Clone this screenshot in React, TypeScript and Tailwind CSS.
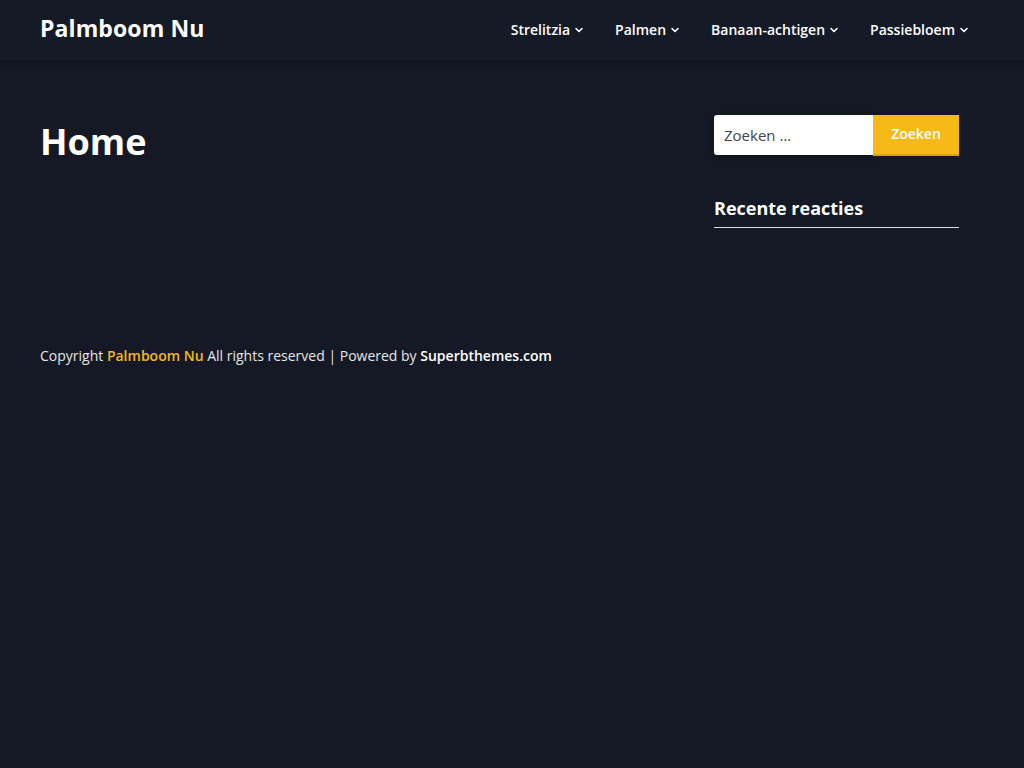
import React from "react";

const navItems = ["Strelitzia", "Palmen", "Banaan-achtigen", "Passiebloem"];

function Chevron() {
  return (
    <svg width="10" height="10" viewBox="0 0 10 10" className="ml-[4px] mt-[1px]">
      <path d="M2 3.5 L5 6.5 L8 3.5" fill="none" stroke="currentColor" strokeWidth="1.6" strokeLinecap="round" strokeLinejoin="round" />
    </svg>
  );
}

export default function App() {
  return (
    <div className="min-h-screen bg-[#141925] text-white font-['Open_Sans',sans-serif]">
      {/* Header */}
      <header className="relative z-10 h-[60px] bg-[#151a27] shadow-[0_2px_6px_rgba(0,0,0,0.35)]">
        <div className="flex h-full items-center justify-between px-[40px]">
          <a className="text-[23px] font-bold leading-none tracking-[0.1px] pb-[4px]">Palmboom Nu</a>
          <nav className="flex items-center gap-[31px] pr-[15px] pb-[2px]">
            {navItems.map((item) => (
              <a key={item} className="flex items-center text-[14px] font-semibold">
                {item}
                <Chevron />
              </a>
            ))}
          </nav>
        </div>
      </header>

      {/* Content */}
      <div className="flex px-[40px] pt-[55px]">
        <main className="flex-1">
          <h1 className="text-[36px] font-bold leading-[52px] mt-[1px]">Home</h1>
        </main>
        <aside className="w-[245px] mr-[25px]">
          <form className="flex h-[41px]" onSubmit={(e) => e.preventDefault()}>
            <input
              placeholder="Zoeken …"
              className="w-[159px] h-[40px] rounded-l-[3px] bg-white px-[10px] text-[15px] text-[#333] placeholder:text-[#444] outline-none shadow-[0_2px_6px_rgba(0,0,0,0.3)]"
            />
            <button className="flex-1 h-[41px] bg-[#f5b918] border-b-[2px] border-[#d9a20f] text-[14px] font-semibold text-white pb-[2px]">
              Zoeken
            </button>
          </form>
          <h2 className="mt-[39px] text-[18px] font-bold leading-[26px]">Recente reacties</h2>
          <div className="mt-[6px] h-px bg-[#dcdcdc]" />
        </aside>
      </div>

      {/* Footer */}
      <footer className="px-[40px] pt-[117px] text-[14px] text-[#e6e6e6]">
        Copyright <span className="font-semibold text-[#f5b918]">Palmboom Nu</span> All rights reserved | Powered by{" "}
        <span className="font-semibold text-white">Superbthemes.com</span>
      </footer>
    </div>
  );
}
